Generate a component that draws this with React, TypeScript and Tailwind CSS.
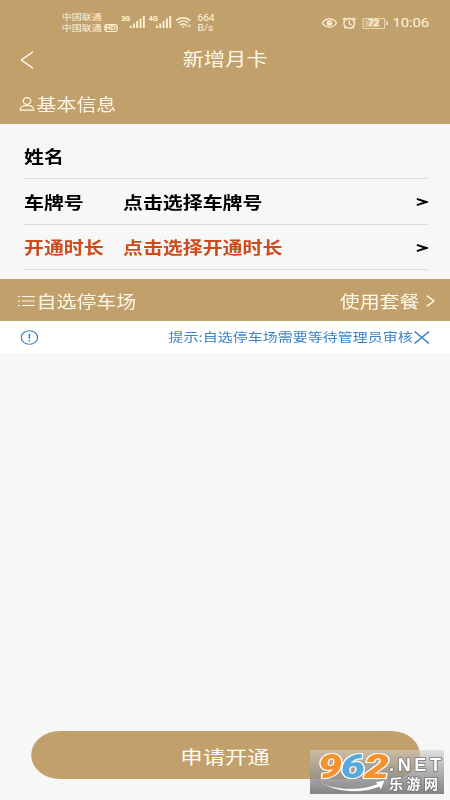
import type { ReactNode } from 'react'

const CJK = "font-['Noto_Sans_CJK_SC',sans-serif]"

function SignalBars() {
    return (
        <svg className="h-[12px] w-[13px]" viewBox="0 0 15 12" preserveAspectRatio="none" fill="currentColor">
            <rect x="0" y="9.5" width="1.8" height="2.5" />
            <rect x="3.2" y="7.5" width="1.8" height="4.5" />
            <rect x="6.4" y="5" width="1.8" height="7" />
            <rect x="9.6" y="2.5" width="1.8" height="9.5" />
            <rect x="12.8" y="0" width="1.8" height="12" />
        </svg>
    )
}

function StatusBar() {
    return (
        <div className="relative h-[45px] text-[#fff3dc]">
            <div className="absolute left-[51.5px] top-[10.5px] text-[8.3px] leading-[11.5px]">
                <div>中国联通</div>
                <div className="flex items-center gap-[2px]">
                    中国联通
                    <span className="flex h-[8px] w-[11px] items-center justify-center rounded-[2px] border border-[#fff3dc] font-['Roboto',sans-serif] text-[6.5px] font-bold leading-none">HD</span>
                </div>
            </div>
            <div className="absolute left-[101px] top-[16px] flex font-['Roboto',sans-serif]">
                <span className="w-[6.5px] origin-left scale-x-80 text-[7.5px] font-bold leading-[6px]">3G</span>
                <SignalBars />
            </div>
            <div className="absolute left-[123.5px] top-[16px] flex font-['Roboto',sans-serif]">
                <span className="w-[6.5px] origin-left scale-x-80 text-[7.5px] font-bold leading-[6px]">4G</span>
                <SignalBars />
            </div>
            <svg className="absolute left-[146px] top-[17px] h-[11px] w-[14px]" viewBox="0 0 17 11" preserveAspectRatio="none" fill="none" stroke="currentColor" strokeWidth="1.4">
                <path d="M.6 3.6C5-.2 11-.2 15.4 3.6" />
                <path d="M3 6c3-2.6 7-2.6 10.2 0" />
                <path d="M5.2 8.1c1.7-1.4 3.7-1.4 5.6 0" />
                <path d="M6.4 9.2L8 11l1.6-1.8z" fill="currentColor" stroke="none" />
                <path d="M12.3 7.2v3.6L10.7 9zM14 7.2v3.6L15.8 9z" fill="currentColor" stroke="none" />
            </svg>
            <div className="absolute left-[164.5px] top-[13px] font-['Roboto',sans-serif] text-[8.5px] leading-[10px]">
                <div>664</div>
                <div>B/s</div>
            </div>
            <svg className="absolute left-[268px] top-[18px] h-[10px] w-[13px]" viewBox="0 0 16 10" preserveAspectRatio="none" fill="none" stroke="currentColor" strokeWidth="1.3">
                <path d="M.8 5C4-.4 12-.4 15.2 5 12 10.4 4 10.4.8 5z" />
                <circle cx="8" cy="5" r="2.8" fill="currentColor" stroke="none" />
                <path d="M8 5V3.6a1.6 1.4 0 0 1 1.5 1.4z" fill="#c2a06b" stroke="none" />
            </svg>
            <svg className="absolute left-[284.5px] top-[17px] h-[12px] w-[12px]" viewBox="0 0 14 12" preserveAspectRatio="none" fill="none" stroke="currentColor" strokeWidth="1.3">
                <ellipse cx="7" cy="6.3" rx="5.2" ry="4.8" />
                <path d="M7 3.6v3l2 1.5M.7 3L3.5.8M13.3 3L10.5.8M3.2 10.2l-1 1.2M10.8 10.2l1 1.2" />
            </svg>
            <div className="absolute left-[302px] top-[17.5px] flex items-center gap-[1px]">
                <div className="relative flex h-[11px] w-[18.5px] items-center justify-center rounded-[1px] border border-[#e9d4ae]">
                    <div className="absolute inset-y-[1px] left-[1px] w-[12px] bg-[#d8bd8f]" />
                    <span className="relative font-['Roboto',sans-serif] text-[8.5px] font-bold leading-none">72</span>
                </div>
                <div className="h-[4px] w-[1.5px] bg-[#fff3dc]" />
            </div>
            <div className="absolute left-[327px] top-[15px] font-['Roboto',sans-serif] text-[12.5px] leading-[16px] tracking-[-0.1px]">10:06</div>
        </div>
    )
}

interface FormRowProps {
    label: string
    value?: string
    accent?: boolean
}

function FormRow({ label, value, accent }: FormRowProps) {
    return (
        <div className="flex h-[45.5px] items-center border-b border-[#dcdcdc] pt-[2px] text-[16.6px] font-bold text-black">
            <span className={`w-[82.5px] ${accent ? 'text-[#d0491b]' : ''}`}>{label}</span>
            <span className={`flex-1 ${accent ? 'text-[#d0491b]' : ''}`}>{value}</span>
            {value && (
                <svg className="h-[8px] w-[9.5px]" viewBox="0 0 11 8" preserveAspectRatio="none" fill="none" stroke="currentColor" strokeWidth="1.9">
                    <path d="M.3.9L9.6 4 .3 7.1" />
                </svg>
            )}
        </div>
    )
}

function SectionBar({ children }: { children: ReactNode }) {
    return (
        <div className="flex h-[42px] items-center bg-[#c2a06b] pt-[2px] text-[16.6px] text-[#fff8e8]">
            {children}
        </div>
    )
}

function Watermark() {
    return (
        <div className="absolute left-[310px] top-[750px] h-[44px] w-[134px] bg-linear-to-b from-[#d4cfc8]/60 to-[#77777c]/90">
            <svg className="h-full w-full overflow-visible" viewBox="0 0 134 44">
                <g fontFamily="Roboto, sans-serif" fontWeight="900" fontStyle="italic" fontSize="33" stroke="#fff" strokeWidth="2.2" paintOrder="stroke" strokeLinejoin="round">
                    <text x="8" y="28" textLength="24" lengthAdjust="spacingAndGlyphs" fill="#f3912c">9</text>
                    <text x="31" y="28" textLength="24" lengthAdjust="spacingAndGlyphs" fill="#58a9dc">6</text>
                    <text x="54" y="28" textLength="25" lengthAdjust="spacingAndGlyphs" fill="#f3912c">2</text>
                </g>
                <path d="M8 31c16 9 41 10 59 3l-2-2 10-2-4 10-2-3C49 45 23 42 8 31z" fill="#fff" stroke="#777" strokeWidth=".5" />
                <g fill="#fff" stroke="#77777a" strokeWidth="1.6" paintOrder="stroke" fontWeight="bold">
                    <text x="79" y="21" fontFamily="Liberation Sans, sans-serif" fontSize="18" textLength="52">.NET</text>
                    <text x="79" y="38.5" fontFamily="Noto Sans CJK SC, sans-serif" fontSize="14" textLength="49">乐游网</text>
                </g>
            </svg>
        </div>
    )
}

export default function App() {
    return (
        <div className={`relative h-[800px] w-[450px] overflow-hidden bg-[#f7f7f7] ${CJK}`}>
            {/* 375px wide layout, stretched to the full screen width */}
            <div className="flex h-[800px] w-[375px] origin-top-left scale-x-120 flex-col">
                <header className="bg-[#c2a06b] text-[#fff8e8]">
                    <StatusBar />
                    <div className="grid h-[37px] grid-cols-[1fr_auto_1fr] items-center px-[17px] pb-[8px]">
                        <svg className="h-[18px] w-[11px]" viewBox="0 0 13 18" preserveAspectRatio="none" fill="none" stroke="currentColor" strokeWidth="1.5">
                            <path d="M12.3.8L.9 9l11.4 8.2" />
                        </svg>
                        <h1 className="pb-[2px] text-[17.7px] leading-none">新增月卡</h1>
                    </div>
                </header>
                <SectionBar>
                    <svg className="ml-[15.5px] mr-[2px] h-[14px] w-[13px]" viewBox="0 0 15 14" preserveAspectRatio="none" fill="none" stroke="currentColor" strokeWidth="1.2">
                        <ellipse cx="7.5" cy="4" rx="3.6" ry="3.3" />
                        <path d="M.8 13.2C.8 10.4 3.5 8.4 7.5 8.4s6.7 2 6.7 4.8z" strokeLinejoin="round" />
                    </svg>
                    <span>基本信息</span>
                </SectionBar>

                <div className="h-[155px] pl-[20px] pr-[18.5px] pt-[9.5px]">
                    <FormRow label="姓名" />
                    <FormRow label="车牌号" value="点击选择车牌号" />
                    <FormRow label="开通时长" value="点击选择开通时长" accent />
                </div>

                <SectionBar>
                    <svg className="ml-[14.5px] mr-[2px] h-[12px] w-[14px]" viewBox="0 0 17 12" preserveAspectRatio="none" stroke="currentColor" strokeWidth="1.2">
                        <path d="M0 1.5h2M4 1.5h13M0 6h2M4 6h13M0 10.5h2M4 10.5h13" />
                    </svg>
                    <span className="flex-1">自选停车场</span>
                    <span>使用套餐</span>
                    <svg className="ml-[5px] mr-[13px] h-[12px] w-[7.5px]" viewBox="0 0 9 12" preserveAspectRatio="none" fill="none" stroke="currentColor" strokeWidth="1.4">
                        <path d="M.7.6L8 6 .7 11.4" />
                    </svg>
                </SectionBar>

                <div className="flex h-[32px] items-center justify-between bg-white pl-[16.5px] pr-[16.6px] text-[12.5px] text-[#3d83c9]">
                    <svg className="h-[15px] w-[15px]" viewBox="0 0 15 15" fill="none" stroke="currentColor" strokeWidth="1.1">
                        <circle cx="7.5" cy="7.5" r="6.8" />
                        <path d="M7.5 3.8v5M7.5 10v1.4" strokeWidth="1.3" />
                    </svg>
                    <div className="flex items-center gap-[1.5px]">
                        <span>提示:自选停车场需要等待管理员审核</span>
                        <svg className="h-[13px] w-[13px]" viewBox="0 0 13 13" stroke="currentColor" strokeWidth="1.3">
                            <path d="M.5.5l12 12M12.5.5l-12 12" />
                        </svg>
                    </div>
                </div>

                <button className="mx-[25.5px] mb-[21.5px] mt-auto h-[47.5px] rounded-full bg-[#c2a06b] pt-[2px] text-[18.6px] text-[#fffdf6]">
                    申请开通
                </button>
            </div>
            <Watermark />
        </div>
    )
}
